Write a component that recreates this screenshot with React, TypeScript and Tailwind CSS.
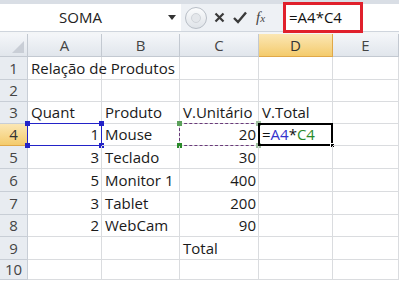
import React from "react";

const font = { fontFamily: '"Open Sans", "Liberation Sans", sans-serif' };

type Cell = { t?: React.ReactNode; r?: boolean };

const rows: { h: number; cells: Cell[] }[] = [
  { h: 23, cells: [{ t: "Relação de Produtos" }, {}, {}, {}, {}] },
  { h: 22, cells: [{}, {}, {}, {}, {}] },
  { h: 22, cells: [{ t: "Quant" }, { t: "Produto" }, { t: "V.Unitário" }, { t: "V.Total" }, {}] },
  { h: 22, cells: [{ t: "1", r: true }, { t: "Mouse" }, { t: "20", r: true }, {}, {}] },
  { h: 23, cells: [{ t: "3", r: true }, { t: "Teclado" }, { t: "30", r: true }, {}, {}] },
  { h: 23, cells: [{ t: "5", r: true }, { t: "Monitor 1" }, { t: "400", r: true }, {}, {}] },
  { h: 23, cells: [{ t: "3", r: true }, { t: "Tablet" }, { t: "200", r: true }, {}, {}] },
  { h: 22, cells: [{ t: "2", r: true }, { t: "WebCam" }, { t: "90", r: true }, {}, {}] },
  { h: 23, cells: [{}, {}, { t: "Total" }, {}, {}] },
  { h: 20, cells: [{}, {}, {}, {}, {}] },
];

const cols = ["A", "B", "C", "D", "E"];

function Handle({ pos, color }: { pos: string; color: string }) {
  return <div className={`absolute w-[5px] h-[5px] ${pos} ${color}`} />;
}

export default function App() {
  return (
    <div className="w-[399px] h-[287px] bg-white overflow-hidden text-[#1a1a1a]" style={font}>
      {/* top strip */}
      <div className="h-[4px] bg-[#d9dee5]" />
      {/* formula bar */}
      <div className="h-[28px] flex bg-[#eef1f5] border-b border-[#cfd5dd]">
        <div className="w-[181px] bg-white flex items-center pl-[59px] pr-[5px]">
          <span className="flex-1 text-[15px] text-[#222]">SOMA</span>
          <svg width="8" height="5" viewBox="0 0 8 5">
            <path d="M0 0 H8 L4 5 Z" fill="#333" />
          </svg>
        </div>
        <div className="w-[102px] flex items-center pl-[4px]">
          <div className="w-[22px] h-[22px] rounded-full border border-[#b8bec6] bg-gradient-to-b from-[#fbfcfd] to-[#dfe3e8] flex items-center justify-center">
            <div className="w-[10px] h-[10px] rounded-full bg-[#e4e7eb] border border-[#d0d4d9]" />
          </div>
          <svg className="ml-[7px]" width="11" height="11" viewBox="0 0 11 11">
            <path d="M1.5 1.5 L9.5 9.5 M9.5 1.5 L1.5 9.5" stroke="#3a3a3a" strokeWidth="2.2" />
          </svg>
          <svg className="ml-[8px]" width="14" height="13" viewBox="0 0 14 13">
            <path d="M1 7 L5 11 L13 1.5" stroke="#3a3a3a" strokeWidth="2.4" fill="none" />
          </svg>
          <span className="ml-[9px] text-[15px] italic text-[#444] leading-none" style={{ fontFamily: '"Liberation Serif", serif' }}>
            f<span className="text-[11px]">x</span>
          </span>
        </div>
        <div className="flex-1 bg-white flex items-stretch">
          <div className="w-[80px] -mt-[2px] h-[31px] border-[3px] border-[#e0202c] flex items-center pl-[3px]">
            <span className="text-[15px] text-[#111]">=A4*C4</span>
          </div>
        </div>
      </div>
      <div className="h-[2px] bg-[#f3f5f7]" />
      {/* grid */}
      <div className="grid grid-cols-[28px_74px_78px_79px_74px_1fr]">
        {/* header */}
        <div className="h-[23px] bg-gradient-to-b from-[#f4f6f9] to-[#e1e6ec] border-r border-b border-[#c3c9d1] flex items-end justify-end p-[3px]">
          <svg width="12" height="12" viewBox="0 0 12 12">
            <path d="M12 0 L12 12 L0 12 Z" fill="#c9ced6" />
          </svg>
        </div>
        {cols.map((c) => (
          <div
            key={c}
            className={`h-[23px] flex items-center justify-center text-[15px] border-r border-b ${
              c === "D"
                ? "bg-gradient-to-b from-[#fbe7b4] to-[#f4cb6b] border-[#e0a848] text-[#333]"
                : "bg-gradient-to-b from-[#f4f6f9] to-[#e1e6ec] border-[#c3c9d1] text-[#444]"
            }`}
          >
            {c}
          </div>
        ))}
        {rows.map((row, ri) => {
          const n = ri + 1;
          return (
            <React.Fragment key={n}>
              <div
                style={{ height: row.h }}
                className={`flex items-center justify-center text-[15px] border-r border-b ${
                  n === 4
                    ? "bg-gradient-to-b from-[#fbe7b4] to-[#f4cb6b] border-[#e0a848] text-[#333]"
                    : "bg-[#e8ecf1] border-[#c8ced6] text-[#444]"
                }`}
              >
                {n}
              </div>
              {row.cells.map((cell, ci) => {
                const isA4 = n === 4 && ci === 0;
                const isC4 = n === 4 && ci === 2;
                const isD4 = n === 4 && ci === 3;
                return (
                  <div
                    key={ci}
                    style={{ height: row.h }}
                    className={`relative border-r border-b border-[#dadcdf] flex items-center text-[15px] whitespace-nowrap ${
                      cell.r ? "justify-end pr-[2px]" : "pl-[3px]"
                    } ${ci === 0 && n === 1 ? "overflow-visible z-10" : ""}`}
                  >
                    <span className="leading-none">{cell.t}</span>
                    {isD4 && (
                      <>
                        <span className="leading-none">
                          <span className="text-[#111]">=</span>
                          <span className="text-[#3333cc]">A4</span>
                          <span className="text-[#111]">*</span>
                          <span className="text-[#2a8a2a]">C4</span>
                        </span>
                        <div className="absolute left-[-1px] top-[-1px] right-[-1px] bottom-[-1px] border-2 border-black" />
                        <div className="absolute right-[-3px] bottom-[-3px] w-[5px] h-[5px] bg-black border border-white" />
                      </>
                    )}
                    {isA4 && (
                      <>
                        <div className="absolute left-[-1px] top-[-1px] right-[-1px] bottom-[-1px] border border-[#2323c8]" />
                        <Handle pos="left-[-3px] top-[-3px]" color="bg-[#2323c8]" />
                        <Handle pos="right-[-3px] top-[-3px]" color="bg-[#2323c8]" />
                        <Handle pos="left-[-3px] bottom-[-3px]" color="bg-[#2323c8]" />
                        <Handle pos="right-[-3px] bottom-[-3px]" color="bg-[#2323c8]" />
                      </>
                    )}
                    {isC4 && (
                      <>
                        <div className="absolute left-[-1px] top-[-1px] right-[-1px] bottom-[-1px] border border-dashed border-[#6a3a7a]" />
                        <Handle pos="left-[-3px] top-[-3px]" color="bg-[#5aa05a]" />
                        <Handle pos="right-[-3px] top-[-3px]" color="bg-[#a0c0a0]" />
                        <Handle pos="left-[-3px] bottom-[-3px]" color="bg-[#2a8a2a]" />
                        <Handle pos="right-[-3px] bottom-[-3px]" color="bg-[#a0c0a0]" />
                      </>
                    )}
                  </div>
                );
              })}
            </React.Fragment>
          );
        })}
      </div>
    </div>
  );
}
